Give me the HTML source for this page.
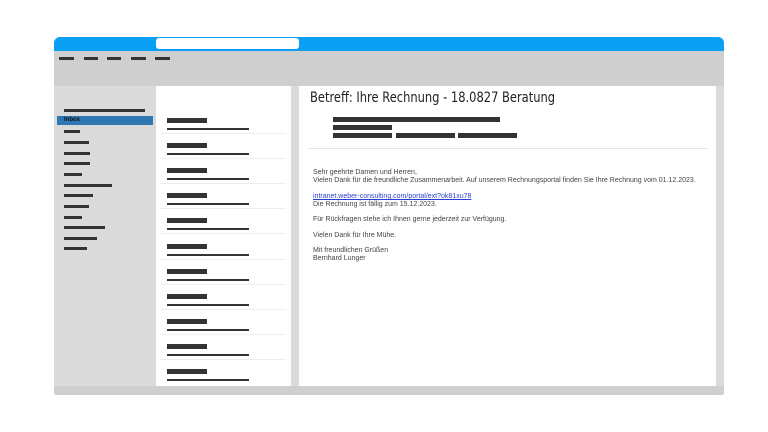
<!DOCTYPE html>
<html><head><style>
*{margin:0;padding:0;box-sizing:border-box}
body{width:768px;height:432px;background:#fff;position:relative;overflow:hidden;font-family:"Liberation Sans",sans-serif}
.a{position:absolute}
.d{position:absolute;background:#333}
.t{position:absolute;font-size:7px;color:#444;white-space:nowrap;left:313px}
</style></head><body>
<div class="a" style="left:54px;top:37px;width:670px;height:358px;background:#cfcfcf;border-radius:6px 6px 2px 2px;overflow:hidden">
 <div class="a" style="left:0;top:0;width:670px;height:14px;background:#0aa0f5"></div>
 <div class="a" style="left:102px;top:1px;width:143px;height:11px;background:#fff;border-radius:3px"></div>
 <div class="a" style="left:0;top:49px;width:670px;height:300px;background:#dadada"></div>
 <div class="a" style="left:102px;top:49px;width:135px;height:300px;background:#fff"></div>
 <div class="a" style="left:245px;top:49px;width:417px;height:300px;background:#fff"></div>
</div>
<div class="d" style="left:59px;top:57px;width:15px;height:3px"></div>
<div class="d" style="left:84px;top:57px;width:14px;height:3px"></div>
<div class="d" style="left:107px;top:57px;width:14px;height:3px"></div>
<div class="d" style="left:131px;top:57px;width:15px;height:3px"></div>
<div class="d" style="left:155px;top:57px;width:15px;height:3px"></div>
<div class="d" style="left:64px;top:109px;width:81px;height:3px"></div>
<div class="a" style="left:57px;top:116px;width:96px;height:9px;background:#2f77b3;font-size:6px;font-weight:bold;color:#111;padding-left:7px;line-height:9px">Inbox</div>
<div class="d" style="left:64px;top:130px;width:16px;height:3px"></div>
<div class="d" style="left:64px;top:141px;width:25px;height:3px"></div>
<div class="d" style="left:64px;top:152px;width:26px;height:3px"></div>
<div class="d" style="left:64px;top:162px;width:26px;height:3px"></div>
<div class="d" style="left:64px;top:173px;width:18px;height:3px"></div>
<div class="d" style="left:64px;top:184px;width:48px;height:3px"></div>
<div class="d" style="left:64px;top:194px;width:29px;height:3px"></div>
<div class="d" style="left:64px;top:205px;width:25px;height:3px"></div>
<div class="d" style="left:64px;top:216px;width:18px;height:3px"></div>
<div class="d" style="left:64px;top:226px;width:41px;height:3px"></div>
<div class="d" style="left:64px;top:237px;width:33px;height:3px"></div>
<div class="d" style="left:64px;top:247px;width:23px;height:3px"></div>
<div id="list"></div>
<script>
var h='';for(var i=0;i<11;i++){var y=118+i*25.1;h+='<div class="d" style="left:167px;top:'+y+'px;width:40px;height:5px"></div><div class="d" style="left:167px;top:'+(y+10)+'px;width:82px;height:2px"></div>';if(i<10)h+='<div class="a" style="left:160px;top:'+(y+15)+'px;width:126px;height:1px;background:#eee"></div>';}
document.getElementById('list').innerHTML=h;
</script>
<div class="a" style="left:310px;top:90px;font-size:14px;color:#222;font-family:'DejaVu Sans',sans-serif;white-space:nowrap;transform:scaleX(0.82);transform-origin:0 0">Betreff: Ihre Rechnung - 18.0827 Beratung</div>
<div class="d" style="left:333px;top:117px;width:167px;height:5px"></div>
<div class="d" style="left:333px;top:125px;width:59px;height:5px"></div>
<div class="d" style="left:333px;top:133px;width:59px;height:5px"></div>
<div class="d" style="left:396px;top:133px;width:59px;height:5px"></div>
<div class="d" style="left:458px;top:133px;width:59px;height:5px"></div>
<div class="a" style="left:308px;top:148px;width:400px;height:1px;background:#e6e6e6"></div>
<div class="t" style="top:169px">Sehr geehrte Damen und Herren,</div>
<div class="t" style="top:177px">Vielen Dank für die freundliche Zusammenarbeit. Auf unserem Rechnungsportal finden Sie Ihre Rechnung vom 01.12.2023.</div>
<div class="t" style="top:193px;color:#2a3fd0;text-decoration:underline">intranet.weber-consulting.com/portal/ext?ok81xu78</div>
<div class="t" style="top:201px">Die Rechnung ist fällig zum 15.12.2023.</div>
<div class="t" style="top:216px">Für Rückfragen stehe ich Ihnen gerne jederzeit zur Verfügung.</div>
<div class="t" style="top:232px">Vielen Dank für Ihre Mühe.</div>
<div class="t" style="top:247px">Mit freundlichen Grüßen</div>
<div class="t" style="top:255px">Bernhard Lunger</div>
</body></html>
